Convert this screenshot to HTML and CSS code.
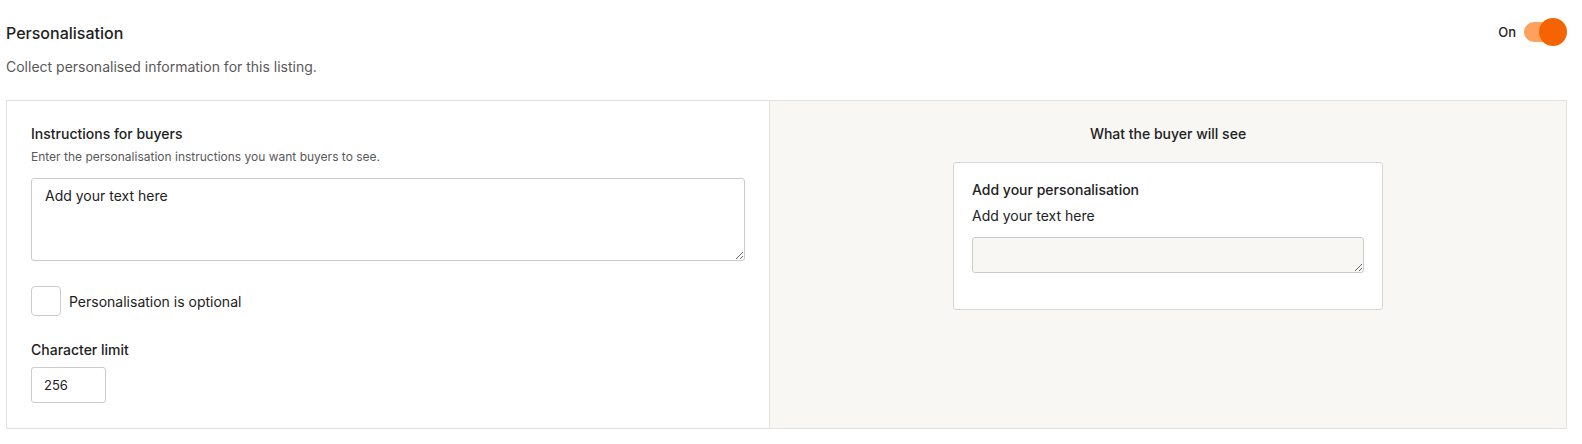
FILE: index.html
```html
<!DOCTYPE html>
<html lang="en">
<head>
  <meta charset="UTF-8" />
  <meta name="viewport" content="width=device-width, initial-scale=1" />
  <title>Personalisation</title>
  <link rel="stylesheet" href="styles.css">
</head>
<body>
  <div class="page">
    <div class="header">
      <div>
        <h2 class="title">Personalisation</h2>
        <p class="subtitle">Collect personalised information for this listing.</p>
      </div>
      <label class="toggle">
        <span>On</span>
        <span class="track"><span class="knob"></span></span>
      </label>
    </div>

    <div class="panel">
      <div class="editor">
        <label class="label" for="instructions">Instructions for buyers</label>
        <p class="hint">Enter the personalisation instructions you want buyers to see.</p>
        <textarea id="instructions" class="field">Add your text here</textarea>

        <label class="check">
          <span class="box"></span>
          <span>Personalisation is optional</span>
        </label>

        <label class="label" for="limit">Character limit</label>
        <input id="limit" class="limit" type="text" value="256" />
      </div>

      <div class="preview">
        <h3 class="preview-title">What the buyer will see</h3>
        <div class="card">
          <div class="card-title">Add your personalisation</div>
          <div class="card-text">Add your text here</div>
          <textarea class="card-field"></textarea>
        </div>
      </div>
    </div>
  </div>
</body>
</html>
```

FILE: styles.css
```css
* { box-sizing:border-box; }
body { margin:0; font-family:Inter, "Noto Sans", sans-serif; color:#222; background:#fff; }
.page { padding:0 15px 0 6px; }

.header { display:flex; justify-content:space-between; align-items:flex-start; padding-top:23px; height:100px; }
.title { margin:0; font-size:16px; font-weight:500; line-height:20px; }
.subtitle { margin:15px 0 0; font-size:14px; color:#595959; line-height:18px; }

.toggle { display:flex; align-items:center; gap:8px; font-size:13px; font-weight:500; margin-top:-1px; }
.track { position:relative; width:42px; height:20px; border-radius:10px; background:#fda25c; margin-right:1px; }
.knob { position:absolute; right:-1px; top:-4px; width:28px; height:28px; border-radius:50%; background:#f56400; }

.panel { display:grid; grid-template-columns:762px 1fr; border:1px solid #e1e3df; height:329px; }

.editor { padding:24px; display:flex; flex-direction:column; align-items:flex-start; }
.label { font-size:14px; font-weight:500; line-height:18px; }
.hint { margin:5px 0 12px; font-size:12px; color:#595959; line-height:18px; }
.field { width:100%; height:83px; border:1px solid #ccc; border-radius:3px; padding:8px 13px; font-family:inherit; font-size:14px; color:#222; resize:vertical; }

.check { display:flex; align-items:center; gap:8px; margin:25px 0 25px; font-size:14px; color:#222; }
.box { width:30px; height:30px; border:1px solid #ccc; border-radius:4px; background:#fff; }

.limit { margin-top:8px; width:75px; height:36px; border:1px solid #ccc; border-radius:3px; padding:0 12px; font-family:inherit; font-size:13px; color:#222; }

.preview { background:#f8f7f4; border-left:1px solid #e1e3df; display:flex; flex-direction:column; align-items:center; padding-top:24px; }
.preview-title { margin:0; font-size:14px; font-weight:500; line-height:18px; }
.card { width:430px; margin-top:19px; background:#fff; border:1px solid #d6d6d6; border-radius:3px; padding:18px 18px 36px; }
.card-title { font-size:14px; font-weight:500; line-height:18px; }
.card-text { margin-top:8px; font-size:14px; line-height:18px; }
.card-field { display:block; width:100%; height:36px; margin-top:12px; background:#f8f7f4; border:1px solid #ccc; border-radius:3px; resize:vertical; }
```
